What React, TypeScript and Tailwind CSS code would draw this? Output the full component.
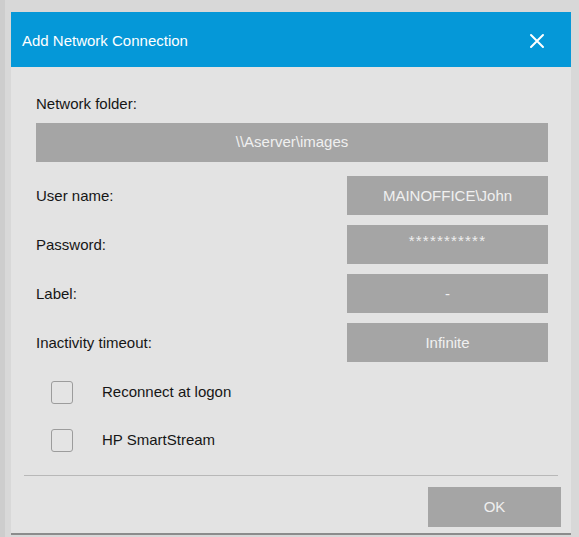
import { useState } from 'react';

const font = { fontFamily: '"Liberation Sans", Arial, sans-serif' };

function Field({ label, value, stars }: { label: string; value: string; stars?: boolean }) {
  return (
    <div className="flex h-[39px] items-center justify-between">
      <span className="text-[15px] leading-5 text-[#161616]">{label}</span>
      <div className="flex h-[39px] w-[201px] items-center justify-center bg-[#a5a5a5]">
        {stars ? (
          <span className="-mt-[8px] text-[15px] leading-5 tracking-[1.2px] text-[#eeeeee]">{value}</span>
        ) : (
          <span className="text-[15px] leading-5 text-[#f0f0f0]">{value}</span>
        )}
      </div>
    </div>
  );
}

function Check({ label }: { label: string }) {
  const [on, setOn] = useState(false);
  return (
    <div className="flex h-[24px] items-center pl-[15px]">
      <button
        onClick={() => setOn(!on)}
        className="h-[23px] w-[22px] rounded-[3px] border-[1.5px] border-[#9c9c9c] bg-[#e4e4e4]"
      />
      <span className="ml-[29px] text-[15px] leading-5 text-[#161616]">{label}</span>
    </div>
  );
}

export default function App() {
  return (
    <div className="h-[537px] w-[579px] overflow-hidden border-l-[5px] border-[#cdcdcd] bg-[#d8d8d8] pt-[12px] pl-[6px]" style={font}>
      <div className="flex h-[523px] w-[560px] flex-col border-b-2 border-[#8c8c8c] bg-[#e3e3e3]">
        {/* header */}
        <div className="flex h-[55px] items-center justify-between bg-[#0598d8] pr-[26px] pl-[11px]">
          <span className="mt-[3px] text-[15px] leading-5 text-white">Add Network Connection</span>
          <svg width="16" height="16" viewBox="0 0 16 16" className="mt-[3px]">
            <path d="M2 2 L14 14 M14 2 L2 14" stroke="white" strokeWidth="2" strokeLinecap="round" />
          </svg>
        </div>

        <div className="flex flex-col pr-[23px] pl-[25px]">
          <span className="mt-[27px] text-[15px] leading-5 text-[#161616]">Network folder:</span>
          <div className="mt-[9px] flex h-[39px] items-center justify-center bg-[#a5a5a5]">
            <span className="-mt-[2px] text-[15px] leading-5 text-[#f0f0f0]">\\Aserver\images</span>
          </div>

          <div className="mt-[14px] flex flex-col gap-[10px]">
            <Field label="User name:" value="MAINOFFICE\John" />
            <Field label="Password:" value="***********" stars />
            <Field label="Label:" value="-" />
            <Field label="Inactivity timeout:" value="Infinite" />
          </div>

          <div className="mt-[18px] flex flex-col gap-[24px]">
            <Check label="Reconnect at logon" />
            <Check label="HP SmartStream" />
          </div>
        </div>

        <div className="mx-[13px] mt-[23px] h-px bg-[#b8b8b8]" />

        <div className="mt-[11px] flex justify-end pr-[10px]">
          <button className="h-[40px] w-[133px] bg-[#a5a5a5] text-[15px] text-[#efefef]">OK</button>
        </div>
      </div>
    </div>
  );
}
